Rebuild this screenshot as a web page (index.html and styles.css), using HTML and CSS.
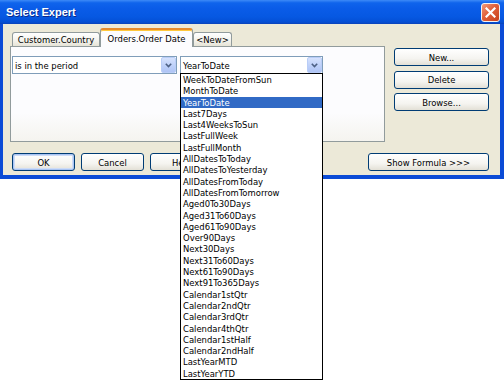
FILE: index.html
```html
<!DOCTYPE html>
<html lang="en">
<head>
    <meta charset="UTF-8">
    <title>Select Expert</title>
    <link rel="stylesheet" href="styles.css">
</head>
<body>
    <div class="window">
        <div class="titlebar">
            <span class="title">Select Expert</span>
            <span class="close">
                <svg width="11" height="11" viewBox="0 0 11 11"><path d="M1.5 1.5 L9.5 9.5 M9.5 1.5 L1.5 9.5" stroke="#fff" stroke-width="2.2" stroke-linecap="square"/></svg>
            </span>
        </div>
        <div class="client">
            <div class="top-row">
                <div class="tabs-area">
                    <div class="tab-strip">
                        <div class="tab tab-customer">Customer.Country</div>
                        <div class="tab tab-orders active">Orders.Order Date</div>
                        <div class="tab tab-new">&lt;New&gt;</div>
                    </div>
                    <div class="tab-panel">
                        <div class="combo combo-op">
                            <span class="combo-text">is in the period</span>
                            <span class="combo-btn">
                                <svg width="7" height="5" viewBox="0 0 7 5"><polyline points="0.8,0.8 3.5,3.6 6.2,0.8" fill="none" stroke="#4d6185" stroke-width="1.6"/></svg>
                            </span>
                        </div>
                        <div class="combo combo-period">
                            <span class="combo-text">YearToDate</span>
                            <span class="combo-btn">
                                <svg width="7" height="5" viewBox="0 0 7 5"><polyline points="0.8,0.8 3.5,3.6 6.2,0.8" fill="none" stroke="#4d6185" stroke-width="1.6"/></svg>
                            </span>
                            <div class="dropdown-list">
                                <div class="list-item">WeekToDateFromSun</div>
                                <div class="list-item">MonthToDate</div>
                                <div class="list-item selected">YearToDate</div>
                                <div class="list-item">Last7Days</div>
                                <div class="list-item">Last4WeeksToSun</div>
                                <div class="list-item">LastFullWeek</div>
                                <div class="list-item">LastFullMonth</div>
                                <div class="list-item">AllDatesToToday</div>
                                <div class="list-item">AllDatesToYesterday</div>
                                <div class="list-item">AllDatesFromToday</div>
                                <div class="list-item">AllDatesFromTomorrow</div>
                                <div class="list-item">Aged0To30Days</div>
                                <div class="list-item">Aged31To60Days</div>
                                <div class="list-item">Aged61To90Days</div>
                                <div class="list-item">Over90Days</div>
                                <div class="list-item">Next30Days</div>
                                <div class="list-item">Next31To60Days</div>
                                <div class="list-item">Next61To90Days</div>
                                <div class="list-item">Next91To365Days</div>
                                <div class="list-item">Calendar1stQtr</div>
                                <div class="list-item">Calendar2ndQtr</div>
                                <div class="list-item">Calendar3rdQtr</div>
                                <div class="list-item">Calendar4thQtr</div>
                                <div class="list-item">Calendar1stHalf</div>
                                <div class="list-item">Calendar2ndHalf</div>
                                <div class="list-item">LastYearMTD</div>
                                <div class="list-item">LastYearYTD</div>
                            </div>
                        </div>
                    </div>
                </div>
                <div class="side-buttons">
                    <button class="btn">New...</button>
                    <button class="btn">Delete</button>
                    <button class="btn">Browse...</button>
                </div>
            </div>
            <div class="bottom-row">
                <button class="btn btn-small default">OK</button>
                <button class="btn btn-small">Cancel</button>
                <button class="btn btn-small">Help</button>
                <button class="btn btn-formula">Show Formula &gt;&gt;&gt;</button>
            </div>
        </div>
    </div>
</body>
</html>
```

FILE: styles.css
```css
* {
    box-sizing: border-box;
}
html, body {
    height: 100%;
}
body {
    margin: 0;
    min-height: 383px;
    background-color: #fff;
    font-family: "DejaVu Sans Condensed", "DejaVu Sans", sans-serif;
    font-stretch: condensed;
    font-size: 9.4px;
    color: #000;
}
.window {
    width: 504px;
}

/* title bar */
.titlebar {
    height: 24px;
    display: flex;
    align-items: center;
    justify-content: space-between;
    padding: 0 4px 0 6px;
    background: linear-gradient(to bottom, #3d8af7 0%, #0f64ec 12%, #0a5ce8 35%, #0658e2 70%, #044fd4 92%, #0a42b8 100%);
}
.title {
    color: #fff;
    font-family: "Liberation Sans", Arial, sans-serif;
    font-stretch: normal;
    font-weight: bold;
    font-size: 11px;
    text-shadow: 1px 1px 0 #0b2a8c;
}
.close {
    width: 19px;
    height: 19px;
    border: 1px solid #f2f2f2;
    border-radius: 3px;
    background: linear-gradient(to bottom right, #f09a7c, #e0603a 45%, #c8401a);
    display: flex;
    align-items: center;
    justify-content: center;
}

/* client area */
.client {
    background-color: #ece9d8;
    border-left: 3px solid #0b4bd6;
    border-right: 4px solid #0b4bd6;
    border-bottom: 4px solid #0b4bd6;
    padding: 4px 11px 4px 7px;
}
.top-row {
    display: flex;
    align-items: flex-start;
}
.tabs-area {
    width: 375px;
}
.tab-strip {
    height: 18px;
    display: flex;
    align-items: flex-end;
    padding-left: 2px;
}
.tab {
    height: 14px;
    border: 1px solid #919b9c;
    border-bottom: none;
    border-radius: 3px 3px 0 0;
    background: linear-gradient(to bottom, #fff, #f3f2ec 60%, #e6e3d6);
    display: flex;
    align-items: center;
    justify-content: center;
    white-space: nowrap;
}
.tab-customer { width: 88px; }
.tab-orders { width: 93px; }
.tab-new { width: 39px; }
.tab.active {
    height: 19px;
    margin-bottom: -1px;
    position: relative;
    z-index: 1;
    background: #fcfcfe;
    border-top: 2px solid #e68b2c;
    box-shadow: inset 0 1px 0 #ffc83c;
}
.tab-panel {
    height: 96px;
    border: 1px solid #919b9c;
    background: linear-gradient(to bottom, #fcfcfe 70%, #f5f4ef);
    padding: 9px 1px;
    display: flex;
    gap: 3px;
    align-items: flex-start;
}

/* combo boxes */
.combo {
    height: 18px;
    border: 1px solid #7f9db9;
    background-color: #fff;
    display: flex;
    align-items: center;
    padding: 0 0 0 2px;
    position: relative;
}
.combo-op { width: 165px; }
.combo-period { width: 143px; }
.combo-text {
    flex: 1;
    white-space: nowrap;
}
.combo-btn {
    width: 15px;
    height: 16px;
    border: 1px solid #b9cdf7;
    border-radius: 2px;
    background: linear-gradient(to bottom, #d6e2fd, #bccff9 60%, #afc4f5);
    display: flex;
    align-items: center;
    justify-content: center;
}
.dropdown-list {
    position: absolute;
    top: 100%;
    left: -1px;
    width: 143px;
    border: 1px solid #000;
    background-color: #fff;
    z-index: 5;
}
.list-item {
    height: 11.3px;
    line-height: 11.3px;
    padding-left: 2px;
    white-space: nowrap;
}
.list-item.selected {
    background-color: #316ac5;
    color: #fff;
}

/* buttons */
.side-buttons {
    width: 95px;
    margin-left: 9px;
    margin-top: 20px;
    display: flex;
    flex-direction: column;
    gap: 4.5px;
}
.btn {
    height: 18px;
    padding: 0;
    border: 1px solid #003c74;
    border-radius: 3px;
    background: linear-gradient(to bottom, #fff, #f5f4f0 60%, #e3e0d6);
    font: inherit;
    color: #000;
    white-space: nowrap;
}
.btn.default {
    box-shadow: inset 0 0 0 1px #a9c4f3, inset 0 0 0 2px #cedcf6;
}
.bottom-row {
    display: flex;
    gap: 6px;
    margin-top: 11px;
    padding-left: 2px;
}
.btn-small { width: 63px; }
.btn-formula {
    width: 121px;
    margin-left: auto;
}
```
